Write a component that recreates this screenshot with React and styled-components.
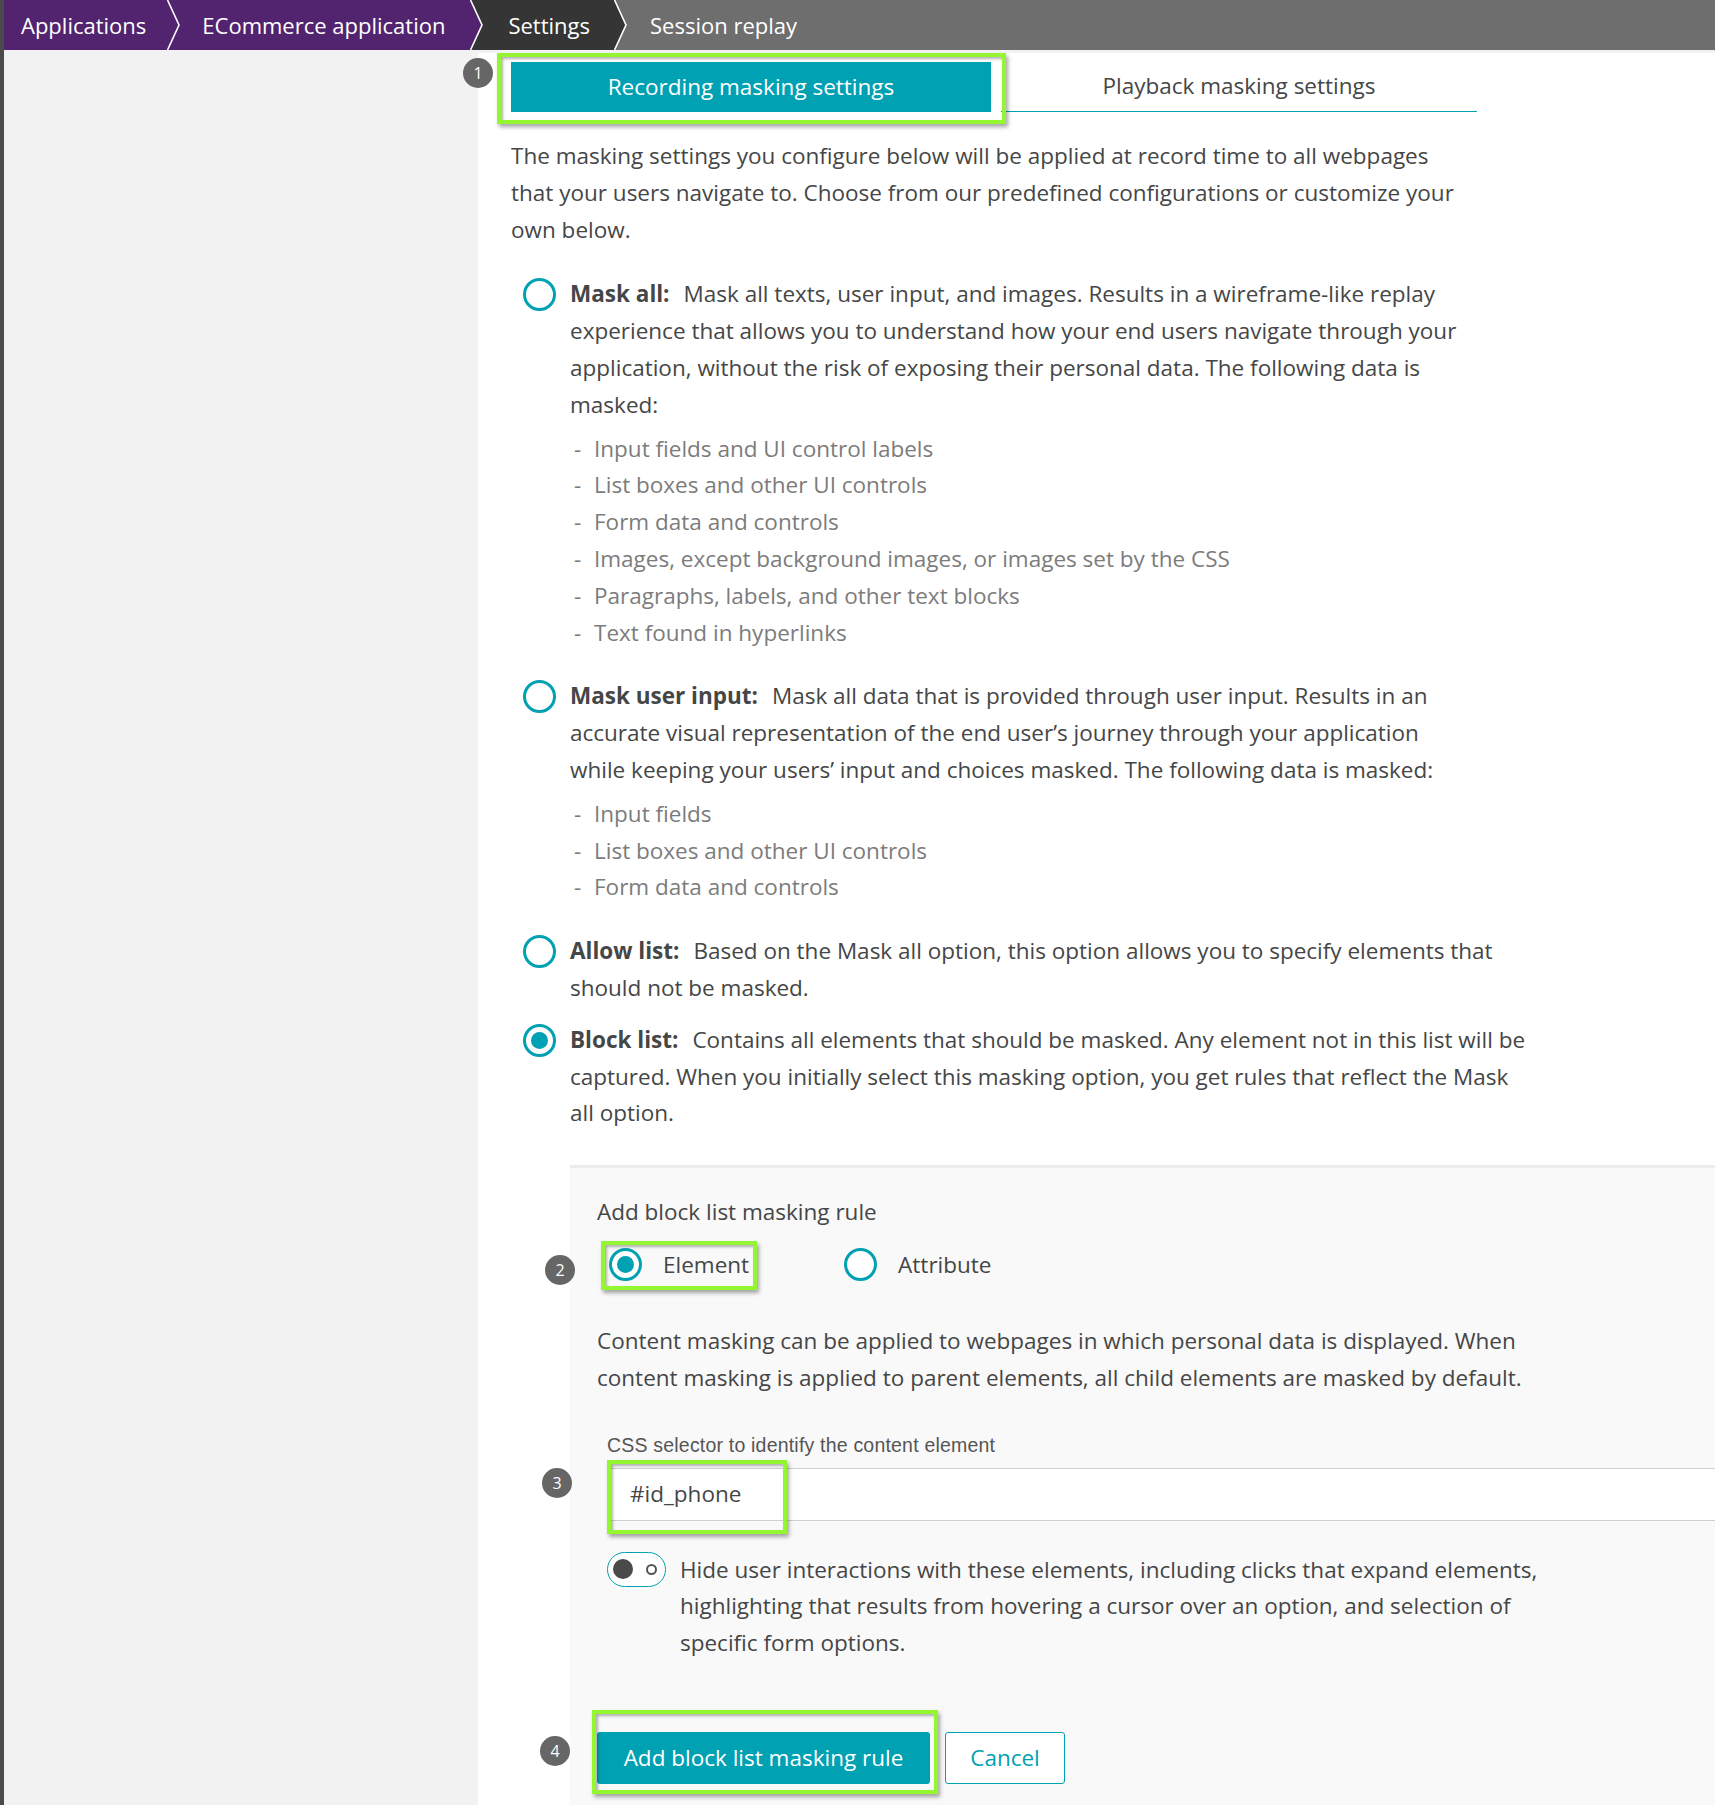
import React, { Fragment } from "react";
import styled, { createGlobalStyle } from "styled-components";

const TEAL = "#00a1b2";
const GREEN = "#94f531";
const TEXT = "#454646";

const GlobalStyle = createGlobalStyle`
  html, body {
    margin: 0;
    padding: 0;
  }
  body {
    font-family: "Open Sans", "Noto Sans", sans-serif;
    background: #f2f2f2;
    color: ${TEXT};
  }
  * {
    box-sizing: border-box;
  }
`;

const crumbs = [
  { label: "Applications", bg: "#52236f", pad: [17, 21] },
  { label: "ECommerce application", bg: "#52236f", pad: [22, 25] },
  { label: "Settings", bg: "#353535", pad: [25, 24] },
  { label: "Session replay", bg: "#6e6e6e", pad: [23, 0] },
];

const options = [
  {
    label: "Mask all:",
    lines: [
      "Mask all texts, user input, and images. Results in a wireframe-like replay",
      "experience that allows you to understand how your end users navigate through your",
      "application, without the risk of exposing their personal data. The following data is",
      "masked:",
    ],
    items: [
      "Input fields and UI control labels",
      "List boxes and other UI controls",
      "Form data and controls",
      "Images, except background images, or images set by the CSS",
      "Paragraphs, labels, and other text blocks",
      "Text found in hyperlinks",
    ],
  },
  {
    label: "Mask user input:",
    lines: [
      "Mask all data that is provided through user input. Results in an",
      "accurate visual representation of the end user\u2019s journey through your application",
      "while keeping your users\u2019 input and choices masked. The following data is masked:",
    ],
    items: [
      "Input fields",
      "List boxes and other UI controls",
      "Form data and controls",
    ],
  },
  {
    label: "Allow list:",
    lines: [
      "Based on the Mask all option, this option allows you to specify elements that",
      "should not be masked.",
    ],
  },
  {
    label: "Block list:",
    checked: true,
    lines: [
      "Contains all elements that should be masked. Any element not in this list will be",
      "captured. When you initially select this masking option, you get rules that reflect the Mask",
      "all option.",
    ],
  },
];

const Lines = ({ lines }) =>
  lines.map((l, i) => (
    <Fragment key={i}>
      {i > 0 && <br />}
      {l}
    </Fragment>
  ));

const App = () => {
  return (
    <Page>
      <GlobalStyle />
      <Breadcrumb>
        {crumbs.map((c, idx) => (
          <Fragment key={c.label}>
            <Crumb $bg={c.bg} $pl={c.pad[0]} $pr={c.pad[1]}>
              {c.label}
            </Crumb>
            {idx < crumbs.length - 1 && (
              <Sep $to={crumbs[idx + 1].bg}>
                <svg width="13" height="50" viewBox="0 0 13 50">
                  <polygon points="0,0 11.5,25 0,50" fill={c.bg} />
                  <polyline
                    points="0.5,0 12,25 0.5,50"
                    fill="none"
                    stroke="#fff"
                    strokeWidth="1.6"
                  />
                </svg>
              </Sep>
            )}
          </Fragment>
        ))}
        <CrumbFill />
      </Breadcrumb>

      <Body>
        <Sidebar />
        <Main>
          <Tabs>
            <Marked>
              <Tab $active $w={480}>
                Recording masking settings
              </Tab>
              <Mark $t={-9} $l={-14} $r={-15} $b={-12} />
              <Badge $t={-4} $l={-48}>1</Badge>
            </Marked>
            <Tab $w={476}>Playback masking settings</Tab>
          </Tabs>

          <Intro>
            The masking settings you configure below will be applied at record time to all webpages
            <br />
            that your users navigate to. Choose from our predefined configurations or customize your
            <br />
            own below.
          </Intro>

          <Options>
            {options.map((o) => (
              <Option key={o.label}>
                <Radio $checked={o.checked} />
                <OptionText>
                  <Label>{o.label}</Label>
                  <Lines lines={o.lines} />
                  {o.items && (
                    <List>
                      {o.items.map((it) => (
                        <li key={it}>
                          <Dash>-</Dash>
                          {it}
                        </li>
                      ))}
                    </List>
                  )}
                </OptionText>
              </Option>
            ))}
          </Options>

          <Panel>
            <div>Add block list masking rule</div>
            <RadioGroup>
              <Marked>
                <RadioItem>
                  <Radio $checked />
                  Element
                </RadioItem>
                <Mark $t={-6} $l={-8} $r={-8} $b={-7} />
                <Badge $t={8} $l={-64}>2</Badge>
              </Marked>
              <RadioItem>
                <Radio />
                Attribute
              </RadioItem>
            </RadioGroup>

            <Description>
              Content masking can be applied to webpages in which personal data is displayed. When
              <br />
              content masking is applied to parent elements, all child elements are masked by default.
            </Description>

            <FieldLabel>CSS selector to identify the content element</FieldLabel>
            <FieldWrap>
              <Input>#id_phone</Input>
              <Mark $t={-8} $l={0} $w={180} $h={74} />
              <Badge $t={0} $l={-65}>3</Badge>
            </FieldWrap>

            <ToggleRow>
              <Toggle>
                <Knob />
                <OffRing />
              </Toggle>
              <div>
                Hide user interactions with these elements, including clicks that expand elements,
                <br />
                highlighting that results from hovering a cursor over an option, and selection of
                <br />
                specific form options.
              </div>
            </ToggleRow>

            <Buttons>
              <Marked>
                <PrimaryButton>Add block list masking rule</PrimaryButton>
                <Mark $t={-22} $l={-5} $r={-8} $b={-10} />
                <Badge $t={4} $l={-57}>4</Badge>
              </Marked>
              <SecondaryButton>Cancel</SecondaryButton>
            </Buttons>
          </Panel>
        </Main>
      </Body>
    </Page>
  );
};

const Page = styled.div`
  width: 1715px;
  height: 1805px;
  overflow: hidden;
  border-left: 4px solid #4b4b4b;
  display: flex;
  flex-direction: column;
`;

const Breadcrumb = styled.div`
  display: flex;
  height: 50px;
  flex: none;
`;

const Crumb = styled.div`
  background: ${(p) => p.$bg};
  color: #fff;
  font-size: 22px;
  line-height: 50px;
  padding: 0 ${(p) => p.$pr}px 0 ${(p) => p.$pl}px;
  white-space: nowrap;
`;

const Sep = styled.div`
  width: 13px;
  height: 50px;
  flex: none;
  background: ${(p) => p.$to};

  svg {
    display: block;
  }
`;

const CrumbFill = styled.div`
  flex: 1;
  background: #6e6e6e;
`;

const Body = styled.div`
  flex: 1;
  display: flex;
  padding-top: 3px;
`;

const Sidebar = styled.div`
  width: 474px;
  flex: none;
  background: #f2f2f2;
`;

const Main = styled.div`
  flex: 1;
  background: #fff;
  padding: 9px 0 0 33px;
  display: flex;
  flex-direction: column;
  font-size: 22.5px;
  line-height: 36.8px;
`;

const Tabs = styled.div`
  display: flex;
  gap: 10px;
  height: 50px;
`;

const Marked = styled.div`
  position: relative;
  display: inline-flex;
`;

const Tab = styled.div`
  width: ${(p) => p.$w}px;
  height: 50px;
  display: flex;
  align-items: center;
  justify-content: center;
  font-size: 22.5px;
  background: ${(p) => (p.$active ? TEAL : "#fff")};
  color: ${(p) => (p.$active ? "#fff" : TEXT)};
  border-bottom: ${(p) => (p.$active ? "none" : `1.5px solid ${TEAL}`)};
`;

const Mark = styled.div`
  position: absolute;
  top: ${(p) => p.$t}px;
  left: ${(p) => p.$l}px;
  ${(p) => (p.$w ? `width: ${p.$w}px;` : `right: ${p.$r}px;`)}
  ${(p) => (p.$h ? `height: ${p.$h}px;` : `bottom: ${p.$b}px;`)}
  border: 4px solid ${GREEN};
  box-shadow: 2px 3px 4px rgba(0, 0, 0, 0.35),
    inset 2px 2px 3px rgba(0, 0, 0, 0.3);
  pointer-events: none;
`;

const Badge = styled.div`
  position: absolute;
  top: ${(p) => p.$t}px;
  left: ${(p) => p.$l}px;
  width: 30px;
  height: 30px;
  border-radius: 50%;
  background: #666;
  color: #fff;
  font-size: 16px;
  line-height: 30px;
  text-align: center;
`;

const Intro = styled.p`
  margin: 26px 0 28px;
  white-space: nowrap;
`;

const Options = styled.div`
  display: flex;
  flex-direction: column;
  gap: 15px;
`;

const Option = styled.div`
  display: flex;
  align-items: flex-start;
  gap: 14px;
  padding-left: 12px;
`;

const Radio = styled.span`
  width: 33px;
  height: 33px;
  flex: none;
  margin-top: 2px;
  border-radius: 50%;
  border: 3px solid ${TEAL};
  background: #fff;
  display: flex;
  align-items: center;
  justify-content: center;

  &::after {
    content: "";
    display: ${(p) => (p.$checked ? "block" : "none")};
    width: 17px;
    height: 17px;
    border-radius: 50%;
    background: ${TEAL};
  }
`;

const OptionText = styled.div`
  white-space: nowrap;
`;

const Label = styled.b`
  font-weight: 700;
  margin-right: 14px;
`;

const List = styled.ul`
  list-style: none;
  margin: 7px 0 12px;
  padding: 0 0 0 4px;
  color: #7c7c7c;
`;

const Dash = styled.span`
  display: inline-block;
  width: 20px;
`;

const Panel = styled.div`
  flex: 1;
  margin: 33px 0 0 59px;
  background: #f9f9f9;
  border-top: 3px solid #ececec;
  padding: 26px 0 0 27px;
  display: flex;
  flex-direction: column;
  align-items: flex-start;
`;

const RadioGroup = styled.div`
  display: flex;
  gap: 95px;
  margin-top: 16px;
  padding-left: 12px;
`;

const RadioItem = styled.label`
  display: flex;
  align-items: center;
  gap: 21px;
  height: 36px;

  ${Radio} {
    margin-top: 0;
  }
`;

const Description = styled.div`
  margin-top: 40px;
  white-space: nowrap;
`;

const FieldLabel = styled.div`
  margin: 37px 0 0 10px;
  font-family: "Liberation Sans", Arial, sans-serif;
  font-size: 19.5px;
  letter-spacing: 0.2px;
  line-height: 22px;
  color: #555;
`;

const FieldWrap = styled.div`
  position: relative;
  align-self: stretch;
  margin: 12px 0 0 10px;
`;

const Input = styled.div`
  height: 53px;
  background: #fff;
  border-top: 1px solid #cfcfcf;
  border-bottom: 1px solid #cfcfcf;
  padding-left: 23px;
  display: flex;
  align-items: center;
`;

const ToggleRow = styled.div`
  display: flex;
  align-items: flex-start;
  gap: 14px;
  margin: 31px 0 0 10px;
  white-space: nowrap;
`;

const Toggle = styled.div`
  width: 59px;
  height: 35px;
  flex: none;
  border: 1.5px solid ${TEAL};
  border-radius: 18px;
  background: #fff;
  display: flex;
  align-items: center;
  justify-content: space-between;
  padding: 0 8px 0 5px;
`;

const Knob = styled.span`
  width: 20px;
  height: 20px;
  border-radius: 50%;
  background: #4a4a4a;
`;

const OffRing = styled.span`
  width: 11px;
  height: 11px;
  border-radius: 50%;
  border: 2px solid #555;
`;

const Buttons = styled.div`
  display: flex;
  gap: 15px;
  margin-top: 70px;
`;

const PrimaryButton = styled.button`
  width: 333px;
  height: 52px;
  border: none;
  border-radius: 3px;
  background: ${TEAL};
  color: #fff;
  font-family: inherit;
  font-size: 22.5px;
`;

const SecondaryButton = styled.button`
  width: 120px;
  height: 52px;
  border: 1px solid ${TEAL};
  border-radius: 3px;
  background: #fff;
  color: ${TEAL};
  font-family: inherit;
  font-size: 22.5px;
`;

export default App;
